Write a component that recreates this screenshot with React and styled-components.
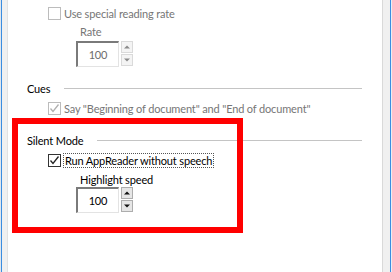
import styled, { createGlobalStyle } from "styled-components";

const Global = createGlobalStyle`
  *, *::before, *::after { box-sizing: border-box; }
  html, body { margin: 0; padding: 0; background: #ffffff; }
  body {
    font-family: Lato, "Liberation Sans", sans-serif;
    font-size: 11px;
    letter-spacing: -0.15px;
    color: #000;
  }
`;

const Window = styled.div`
  display: flex;
  width: 392px;
  height: 272px;
  overflow: hidden;
`;

const LeftEdge = styled.div`
  flex: none;
  width: 8px;
  background: #f0f0f0;
  border-left: 1px solid #dfe6ee;
  border-right: 1px solid #e2e2e2;
  box-shadow: inset 1px 0 0 #3b8de0;
`;

const RightEdge = styled.div`
  flex: none;
  width: 10px;
  background: #f0f0f0;
  border-left: 1px solid #d9d9d9;
  border-right: 1px solid #e9eef3;
  box-shadow: inset -1px 0 0 #3b8de0;
`;

const Panel = styled.div`
  position: relative;
  flex: 1;
  background: #fff;
  padding: 7px 20px 0 19px;
  display: flex;
  flex-direction: column;
`;

const GroupHeader = styled.div`
  display: flex;
  align-items: center;
  height: 15px;
  margin-top: ${(p) => p.$top}px;
  line-height: 15px;
  gap: 14px;
  &::after {
    content: "";
    flex: 1;
    height: 1px;
    background: #c4c4c4;
  }
`;

const CheckRow = styled.label`
  display: flex;
  align-items: center;
  height: 13px;
  margin: ${(p) => p.$top || 0}px 0 0 21px;
  gap: ${(p) => (p.$focused ? 2 : 3)}px;
  line-height: 13px;
  color: ${(p) => (p.$disabled ? "#767676" : "#000")};
  white-space: nowrap;
`;

const Box = styled.span`
  flex: none;
  width: 13px;
  height: 13px;
  border: 1px solid ${(p) => (p.$disabled ? "#bcbcbc" : "#333")};
  background: #fff;
  display: flex;
  align-items: center;
  justify-content: center;
`;

const Caption = styled.span`
  padding: ${(p) => (p.$focused ? "0 1px" : "0")};
  border: ${(p) => (p.$focused ? "1px dotted #555" : "none")};
  height: ${(p) => (p.$focused ? "15px" : "auto")};
  line-height: 13px;
`;

const SpinGroup = styled.div`
  display: flex;
  flex-direction: column;
  margin: ${(p) => p.$top}px 0 0 49px;
`;

const SpinLabel = styled.div`
  height: 15px;
  line-height: 15px;
  padding-left: 4px;
  margin-bottom: ${(p) => p.$gap}px;
  color: ${(p) => (p.$disabled ? "#767676" : "#000")};
`;

const SpinRow = styled.div`
  display: flex;
  gap: 2px;
`;

const SpinInput = styled.div`
  width: 43px;
  height: 26px;
  border-top: 2px solid #7a7a7a;
  border-left: 2px solid #7a7a7a;
  border-right: 1px solid #e3e3e3;
  border-bottom: 1px solid #e3e3e3;
  background: #fff;
  display: flex;
  align-items: center;
  justify-content: center;
  color: ${(p) => (p.$disabled ? "#6d6d6d" : "#000")};
`;

const SpinButtons = styled.div`
  display: flex;
  flex-direction: column;
  gap: 1px;
`;

const SpinButton = styled.div`
  width: 12px;
  height: 12px;
  background: ${(p) => (p.$disabled ? "#f4f4f4" : "#e6e6e6")};
  border: 1px solid ${(p) => (p.$disabled ? "#dadada" : "#adadad")};
  display: flex;
  align-items: center;
  justify-content: center;
`;

const Highlight = styled.div`
  position: absolute;
  left: 4px;
  top: 118px;
  width: 231px;
  height: 115px;
  border: 6px solid #ff0000;
  pointer-events: none;
`;

function Check({ checked, disabled }) {
  return (
    <Box $disabled={disabled}>
      {checked && (
        <svg width="11" height="11" viewBox="0 0 11 11">
          <path
            d="M1.5 5.5 L4 8.5 L9.5 1.5"
            fill="none"
            stroke={disabled ? "#b0b0b0" : "#222"}
            strokeWidth="1.3"
          />
        </svg>
      )}
    </Box>
  );
}

function Arrow({ up, disabled }) {
  return (
    <svg width="6" height="4" viewBox="0 0 6 4">
      <path
        d={up ? "M0 3.5 L3 0.5 L6 3.5 Z" : "M0 0.5 L3 3.5 L6 0.5 Z"}
        fill={disabled ? "#8a8a8a" : "#111"}
      />
    </svg>
  );
}

function Spinner({ label, value, disabled, top, gap }) {
  return (
    <SpinGroup $top={top}>
      <SpinLabel $disabled={disabled} $gap={gap}>
        {label}
      </SpinLabel>
      <SpinRow>
        <SpinInput $disabled={disabled}>{value}</SpinInput>
        <SpinButtons>
          <SpinButton $disabled={disabled}>
            <Arrow up disabled={disabled} />
          </SpinButton>
          <SpinButton $disabled={disabled}>
            <Arrow disabled={disabled} />
          </SpinButton>
        </SpinButtons>
      </SpinRow>
    </SpinGroup>
  );
}

export default function App() {
  return (
    <Window>
      <Global />
      <LeftEdge />
      <Panel>
        <CheckRow $disabled>
          <Check disabled />
          <Caption>Use special reading rate</Caption>
        </CheckRow>
        <Spinner label="Rate" value="100" disabled top={4} gap={2} />

        <GroupHeader $top={14}>Cues</GroupHeader>
        <CheckRow $disabled $top={6}>
          <Check checked disabled />
          <Caption>Say "Beginning of document" and "End of document"</Caption>
        </CheckRow>

        <GroupHeader $top={18}>Silent Mode</GroupHeader>
        <CheckRow $top={6} $focused>
          <Check checked />
          <Caption $focused>Run AppReader without speech</Caption>
        </CheckRow>
        <Spinner label="Highlight speed" value="100" top={5} gap={0} />

        <Highlight />
      </Panel>
      <RightEdge />
    </Window>
  );
}
